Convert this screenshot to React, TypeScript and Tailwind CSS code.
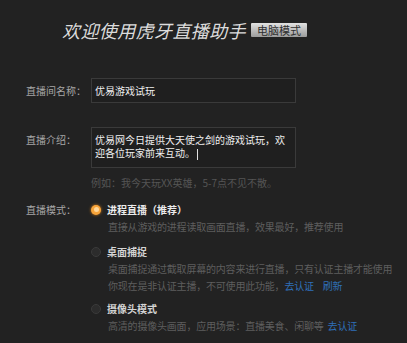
const cjk = { fontFamily: '"Noto Sans CJK SC", "Noto Sans", sans-serif' };

function Radio({ checked }: { checked?: boolean }) {
  if (checked) {
    return (
      <span className="flex h-[10px] w-[10px] items-center justify-center rounded-full bg-[#f7a43a] shadow-[0_0_3px_#d9801c]">
        <span className="h-[5px] w-[5px] rounded-full bg-[#ffd79a]" />
      </span>
    );
  }
  return <span className="h-[10px] w-[10px] rounded-full border border-[#3a3a3a] bg-[#2c2c2c]" />;
}

function ModeOption({
  checked,
  title,
  lines,
  className,
}: {
  checked?: boolean;
  title: string;
  lines: React.ReactNode[];
  className?: string;
}) {
  return (
    <div className={className}>
      <div className="flex h-[17px] items-center">
        <span className="flex w-[16px] justify-start">
          <Radio checked={checked} />
        </span>
        <span className={`font-bold ${checked ? 'text-[#ececec]' : 'text-[#d4d4d4]'}`}>{title}</span>
      </div>
      {lines.map((line, i) => (
        <div key={i} className="h-[17px] whitespace-nowrap pl-[17px] leading-[17px] tracking-[-0.2px] text-[#5e5e5e]">
          {line}
        </div>
      ))}
    </div>
  );
}

export default function App() {
  return (
    <div className="h-[343px] w-[407px] overflow-hidden bg-[#222222] text-[10px]" style={cjk}>
      {/* header */}
      <div className="flex items-center gap-[5px] pl-[62px] pt-[18px]">
        <h1 className="text-[18px] italic leading-[24px] tracking-[0.4px] text-[#dcdcdc]">欢迎使用虎牙直播助手</h1>
        <span className="rounded-[1px] bg-gradient-to-b from-[#e2e2e2] to-[#9c9c9c] px-[6px] text-[11px] leading-[14px] text-[#2e2e2e]">
          电脑模式
        </span>
      </div>

      <div className="pl-[26px]">
        {/* room name */}
        <div className="mt-[36px] flex items-center">
          <label className="w-[65px] text-[#a6a6a6]">直播间名称：</label>
          <div className="flex h-[25px] w-[205px] items-center border border-[#3a3a3a] bg-[#1f1f1f] pl-[3px] text-[#f0f0f0]">
            优易游戏试玩
          </div>
        </div>

        {/* intro */}
        <div className="mt-[24px] flex items-start">
          <label className="mt-[6px] w-[65px] leading-[13px] text-[#a6a6a6]">直播介绍：</label>
          <div className="h-[41px] w-[205px] border border-[#3a3a3a] bg-[#1f1f1f] pl-[3px] pr-[8px] pt-[5px] leading-[13px] text-[#f0f0f0]">
            优易网今日提供大天使之剑的游戏试玩，欢迎各位玩家前来互动。
            <span className="ml-[2px] inline-block h-[11px] border-l border-[#e0e0e0] align-middle" />
          </div>
        </div>
        <div className="mt-[8px] pl-[65px] leading-[14px] text-[#555555]">例如：我今天玩XX英雄，5-7点不见不散。</div>

        {/* mode */}
        <div className="mt-[11px] flex items-start">
          <label className="w-[65px] leading-[17px] text-[#a6a6a6]">直播模式：</label>
          <div className="leading-[17px]">
            <ModeOption checked title="进程直播（推荐）" lines={['直接从游戏的进程读取画面直播，效果最好，推荐使用']} />
            <ModeOption
              className="mt-[8px]"
              title="桌面捕捉"
              lines={[
                '桌面捕捉通过截取屏幕的内容来进行直播，只有认证主播才能使用',
                <>
                  你现在是非认证主播，不可使用此功能，
                  <span className="text-[#2f6fb8]">去认证</span>
                  <span className="ml-[9px] text-[#2f6fb8]">刷新</span>
                </>,
              ]}
            />
            <ModeOption
              className="mt-[6px]"
              title="摄像头模式"
              lines={[
                <>
                  高清的摄像头画面，应用场景：直播美食、闲聊等
                  <span className="ml-[4px] text-[#2f6fb8]">去认证</span>
                </>,
              ]}
            />
          </div>
        </div>
      </div>
    </div>
  );
}
